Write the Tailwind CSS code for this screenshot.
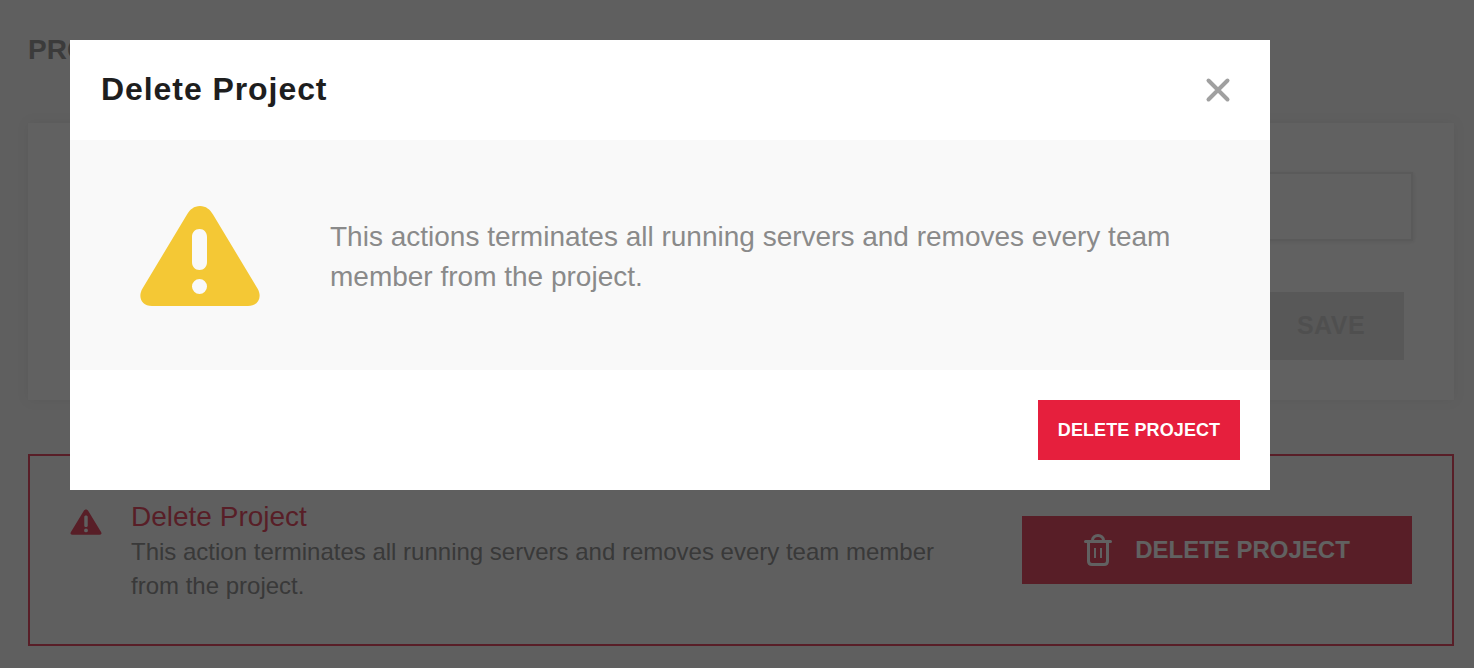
<!DOCTYPE html>
<html>
<head>
<meta charset="utf-8">
<script src="https://cdn.jsdelivr.net/npm/@tailwindcss/browser@4"></script>
</head>
<body class="h-[668px] overflow-hidden bg-[#f7f7f7] font-['Liberation_Sans',Arial,sans-serif]">
  <main class="flex h-[668px] flex-col pl-7 pr-5">
    <h1 class="mt-[33px] h-[90px] text-[28px] leading-[34px] font-bold text-[#808080]">PROJECT SETTINGS</h1>
    <section class="flex h-[277px] flex-col items-end bg-white pt-[49px] pr-[41px] shadow-[0_0_12px_rgba(0,0,0,0.08)]">
      <div class="h-[69px] w-[900px] border-2 border-[#e6e6e6] bg-white shadow-[1px_1px_4px_rgba(0,0,0,0.1)]"></div>
      <button class="mt-[51px] mr-[9px] flex h-[68px] w-[146px] items-center justify-center bg-[#e0e0e0] text-[25px] font-bold tracking-[0.5px] text-[#c4c4c4]">SAVE</button>
    </section>
    <section class="mt-[54px] flex h-[192px] border-2 border-[#e01f3d] pt-[47px] pl-[40px] pr-[40px]">
      <svg class="mt-[6px] h-[26px] w-[32px] shrink-0" viewBox="0 0 33 27" aria-hidden="true">
        <path fill="#e01f3d" fill-rule="evenodd" d="M16.5 0.500c1 0 1.800.6 2.400 1.500l13.400 22.200c.8 1.400 0 2.600-1.600 2.600H2.300C.7 26.800-.1 25.600.7 24.200L14.100 2c.6-.9 1.400-1.500 2.400-1.500zM14.700 8.200v9.200c0 .8.8 1.400 1.800 1.400s1.800-.6 1.800-1.400V8.200c0-.8-.8-1.400-1.800-1.400s-1.800.6-1.800 1.400zM16.500 20.200a2 2 0 1 0 0 4 2 2 0 0 0 0-4z"/>
      </svg>
      <div class="ml-[29px] w-[830px]">
        <h2 class="-mt-[1px] text-[28px] leading-[30px] text-[#e01f3d]">Delete Project</h2>
        <p class="mt-[3px] text-2xl leading-[34px] text-[#787878]">This action terminates all running servers and removes every team member from the project.</p>
      </div>
      <button class="mt-[13px] ml-auto flex h-[68px] w-[390px] shrink-0 items-center justify-center gap-[23px] bg-[#e01f3d] text-2xl font-bold text-white">
        <svg class="h-8 w-[28px]" viewBox="0 0 28 32" fill="none" stroke="#ffffff" stroke-width="3" aria-hidden="true">
          <path d="M1.500 7.500h25M8.500 6.500a5.500 5 0 0 1 11 0M4.500 8v19c0 2.500 1.500 3.500 3.500 3.500h12c2 0 3.500-1 3.500-3.500V8" stroke-linecap="round"/>
          <path d="M11 14v10M17 14v10" stroke-width="2"/>
        </svg>
        <span>DELETE PROJECT</span>
      </button>
    </section>
  </main>

  <div class="fixed inset-0 bg-[#1e1e1e]/70">
    <div class="absolute top-[40px] left-[70px] flex h-[450px] w-[1200px] flex-col bg-white">
      <header class="flex h-[100px] items-center justify-between pr-[39px] pl-[31px]">
        <h2 class="pb-[2px] text-[32px] font-bold tracking-[0.93px] text-[#1e1e1e]">Delete Project</h2>
        <svg class="h-[26px] w-[26px]" viewBox="0 0 26 26" fill="none" stroke="#a0a0a0" stroke-width="4" stroke-linecap="round" aria-hidden="true">
          <path d="M3.500 3.500l19 19M22.500 3.500l-19 19"/>
        </svg>
      </header>
      <div class="flex h-[230px] items-center bg-[#f9f9f9] pl-[70px]">
        <svg class="mt-[2px] h-[100px] w-[120px] shrink-0" viewBox="0 0 120 100" aria-hidden="true">
          <path fill="#f4c835" fill-rule="evenodd" d="M60 0c6 0 10 3.500 13 8.500l44.500 74c5 8.500 1 17.500-9.500 17.500H12C1.500 100-2.500 91 2.500 82.500L47 8.500C50 3.500 54 0 60 0zM52 31v25c0 4.500 3 8 7.500 8s7.500-3.500 7.500-8V31c0-4.500-3-8-7.500-8s-7.500 3.500-7.500 8zM59.500 73a7.500 7.500 0 1 0 0 15 7.500 7.500 0 0 0 0-15z"/>
        </svg>
        <p class="mt-[4px] ml-[70px] w-[860px] text-[28px] leading-[40px] text-[#8a8a8a]">This actions terminates all running servers and removes every team member from the project.</p>
      </div>
      <footer class="flex flex-1 items-center justify-end pr-[30px]">
        <button class="flex h-[60px] w-[202px] items-center justify-center bg-[#e61f3d] text-[18px] font-bold tracking-[0.1px] text-white">DELETE PROJECT</button>
      </footer>
    </div>
  </div>
</body>
</html>
